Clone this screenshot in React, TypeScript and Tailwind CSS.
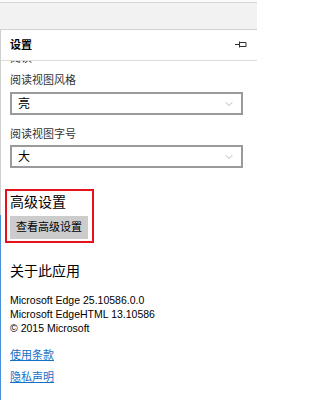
import { ChevronDown } from "lucide-react";

const font = { fontFamily: '"Noto Sans", "Noto Sans CJK SC", sans-serif' };
const latin = { fontFamily: '"Liberation Sans", "Noto Sans CJK SC", sans-serif' };

function PinIcon() {
  return (
    <svg width="12" height="8" viewBox="0 0 12 8" className="text-[#333]">
      <path d="M0 3.5H4M4.5 0.5V6.5M5 1.5H11V5.5H5" fill="none" stroke="currentColor" strokeWidth="1" />
    </svg>
  );
}

function Dropdown({ value }: { value: string }) {
  return (
    <div className="ml-[9px] flex h-[23px] w-[233px] items-center justify-between border-2 border-[#9a9a9a] bg-white pl-[6px] pr-[6px]">
      <span className="text-[12px] leading-none text-black">{value}</span>
      <ChevronDown className="h-[12px] w-[12px] text-[#888]" strokeWidth={1.2} />
    </div>
  );
}

export default function App() {
  return (
    <div className="relative h-[400px] w-[257px] overflow-hidden bg-white" style={font}>
      <div className="h-[3px] border-b border-[#d6d6d6] bg-[#fafafa]" />
      <div className="h-[27px] border-b border-[#d2d2d2] bg-[#f2f2f2]" />

      <div className="flex h-[370px]">
        <div className="flex w-px flex-col">
          <div className="h-[185px] bg-[#cfcfcf]" />
          <div className="flex-1 bg-[#4a90d9]" />
        </div>

        <div className="flex-1">
          <div className="flex h-[31px] items-center justify-between border-b border-[#dcdcdc] pl-[9px] pr-[10px]">
            <span className="text-[11px] font-bold text-black">设置</span>
            <PinIcon />
          </div>

          {/* scrolled-away heading, only its lower edge peeks out under the header */}
          <div className="h-[5px] overflow-hidden">
            <div className="-mt-[11px] pl-[9px] text-[11px] leading-[16px] text-[#333]">阅读</div>
          </div>

          <div className="mt-[6px] pl-[9px] text-[11px] leading-[16px] text-[#333]">阅读视图风格</div>
          <div className="mt-[4px]">
            <Dropdown value="亮" />
          </div>

          <div className="mt-[11px] pl-[9px] text-[11px] leading-[16px] text-[#333]">阅读视图字号</div>
          <div className="mt-[3px]">
            <Dropdown value="大" />
          </div>

          <div className="ml-[4px] mt-[21px] w-[89px] border-2 border-[#e8101a] pb-[2px] pl-[3px] pt-[2px]">
            <div className="text-[14px] leading-[18px] text-black">高级设置</div>
            <div className="mt-[5px] flex h-[23px] w-[78px] items-center justify-center bg-[#cccccc] text-[11px] text-black">
              查看高级设置
            </div>
          </div>

          <div className="mt-[19px] pl-[9px] text-[14px] leading-[18px] text-black">关于此应用</div>

          <div className="mt-[13px] pl-[9px] text-[10.5px] leading-[14px] text-black" style={latin}>
            <div>Microsoft Edge 25.10586.0.0</div>
            <div>Microsoft EdgeHTML 13.10586</div>
            <div>© 2015 Microsoft</div>
          </div>

          <div className="mt-[12px] pl-[9px] text-[11px] leading-[16px] text-[#1570c8] underline">使用条款</div>
          <div className="mt-[6px] pl-[9px] text-[11px] leading-[16px] text-[#1570c8] underline">隐私声明</div>
        </div>
      </div>
    </div>
  );
}
